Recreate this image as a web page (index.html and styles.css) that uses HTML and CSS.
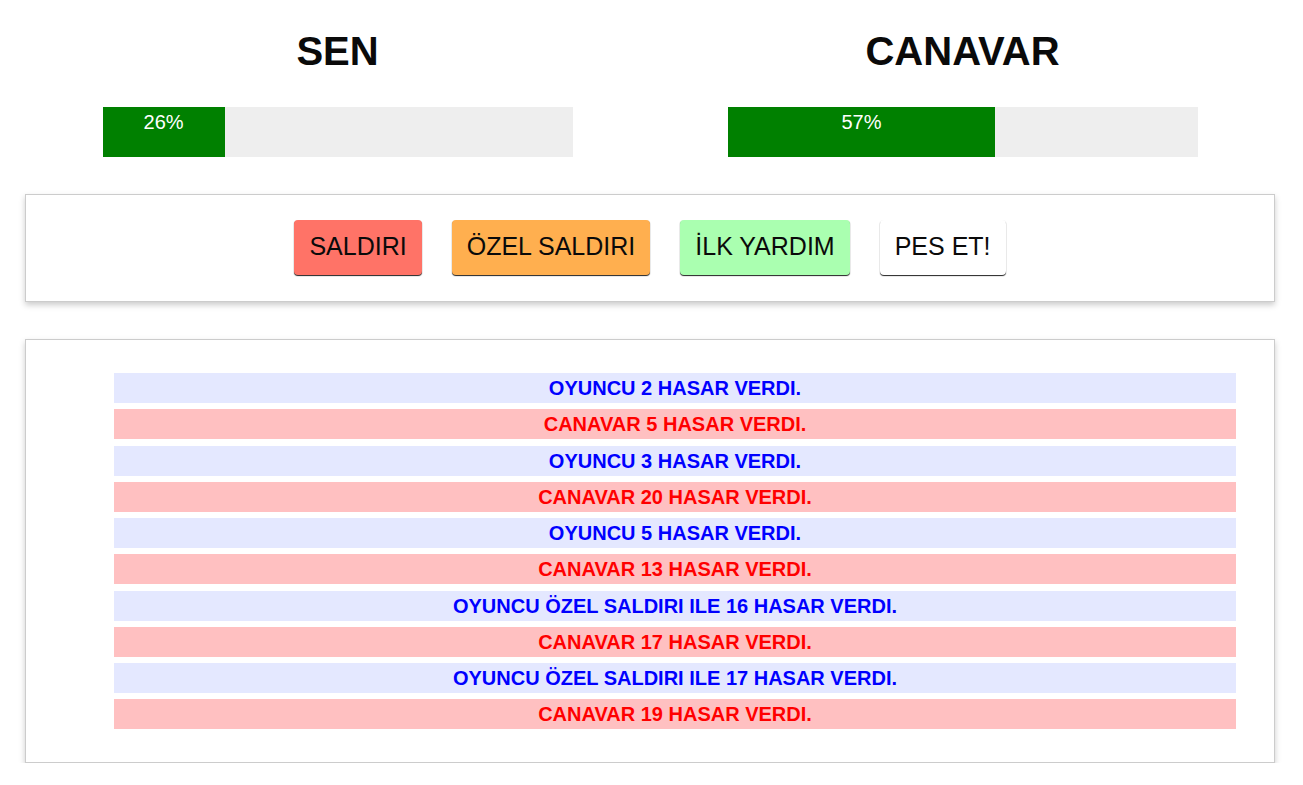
FILE: index.html
```html
<!DOCTYPE html>
<html lang="tr">
<head>
<meta charset="utf-8">
<title>Canavar Avcısı</title>
<link rel="stylesheet" href="styles.css">
</head>
<body>
<div class="page">
  <section class="status">
    <div class="fighter">
      <h1 class="fighter-name">SEN</h1>
      <div class="healthbar">
        <div class="healthbar-fill" style="width: 26%">26%</div>
      </div>
    </div>
    <div class="fighter">
      <h1 class="fighter-name">CANAVAR</h1>
      <div class="healthbar">
        <div class="healthbar-fill" style="width: 57%">57%</div>
      </div>
    </div>
  </section>

  <section class="panel controls">
    <button class="btn btn-attack">SALDIRI</button>
    <button class="btn btn-special">ÖZEL SALDIRI</button>
    <button class="btn btn-heal">İLK YARDIM</button>
    <button class="btn btn-giveup">PES ET!</button>
  </section>

  <section class="panel log">
    <ul class="log-list">
      <li class="turn player-turn">OYUNCU 2 HASAR VERDI.</li>
      <li class="turn monster-turn">CANAVAR 5 HASAR VERDI.</li>
      <li class="turn player-turn">OYUNCU 3 HASAR VERDI.</li>
      <li class="turn monster-turn">CANAVAR 20 HASAR VERDI.</li>
      <li class="turn player-turn">OYUNCU 5 HASAR VERDI.</li>
      <li class="turn monster-turn">CANAVAR 13 HASAR VERDI.</li>
      <li class="turn player-turn">OYUNCU ÖZEL SALDIRI ILE 16 HASAR VERDI.</li>
      <li class="turn monster-turn">CANAVAR 17 HASAR VERDI.</li>
      <li class="turn player-turn">OYUNCU ÖZEL SALDIRI ILE 17 HASAR VERDI.</li>
      <li class="turn monster-turn">CANAVAR 19 HASAR VERDI.</li>
    </ul>
  </section>
</div>
</body>
</html>
```

FILE: styles.css
```css
* {
  box-sizing: border-box;
}

html, body {
  margin: 0;
  padding: 0;
  background: #ffffff;
}

body {
  font-family: "Liberation Sans", Arial, sans-serif;
  color: #0a0a0a;
}

.page {
  width: 1250px;
  margin-left: 25px;
  padding-top: 28px;
}

.status {
  display: grid;
  grid-template-columns: 1fr 1fr;
}

.fighter {
  display: flex;
  flex-direction: column;
  align-items: center;
}

.fighter-name {
  margin: 0;
  font-size: 40px;
  line-height: 46px;
  font-weight: bold;
  color: #0a0a0a;
}

.healthbar {
  width: 470px;
  height: 50px;
  margin-top: 33px;
  background-color: #eeeeee;
}

.healthbar-fill {
  height: 100%;
  background-color: #008000;
  color: #ffffff;
  font-size: 20px;
  line-height: 30px;
  text-align: center;
}

.panel {
  border: 1px solid #cccccc;
  box-shadow: 0 3px 6px #cccccc;
  background: #ffffff;
}

.controls {
  margin-top: 37px;
  padding: 25px 0 26px;
  display: flex;
  justify-content: center;
  gap: 30px;
}

.btn {
  font-family: "Liberation Sans", Arial, sans-serif;
  font-size: 25px;
  line-height: 29px;
  padding: 12px 15px 14px;
  border: none;
  border-radius: 4px;
  box-shadow: 0 1px 1px #222222;
  color: #0a0a0a;
  cursor: pointer;
}

.btn-attack {
  background-color: #ff7367;
}

.btn-special {
  background-color: #ffaf4f;
}

.btn-heal {
  background-color: #aaffb0;
}

.btn-giveup {
  background-color: #ffffff;
}

.log {
  margin-top: 37px;
  padding: 33px 38px 33px 88px;
}

.log-list {
  list-style: none;
  margin: 0;
  padding: 0;
  display: flex;
  flex-direction: column;
  gap: 6.25px;
}

.turn {
  height: 30px;
  line-height: 30px;
  text-align: center;
  font-size: 20px;
  font-weight: bold;
}

.player-turn {
  color: #0000ff;
  background-color: #e4e8ff;
}

.monster-turn {
  color: #ff0000;
  background-color: #ffc0c1;
}
```
